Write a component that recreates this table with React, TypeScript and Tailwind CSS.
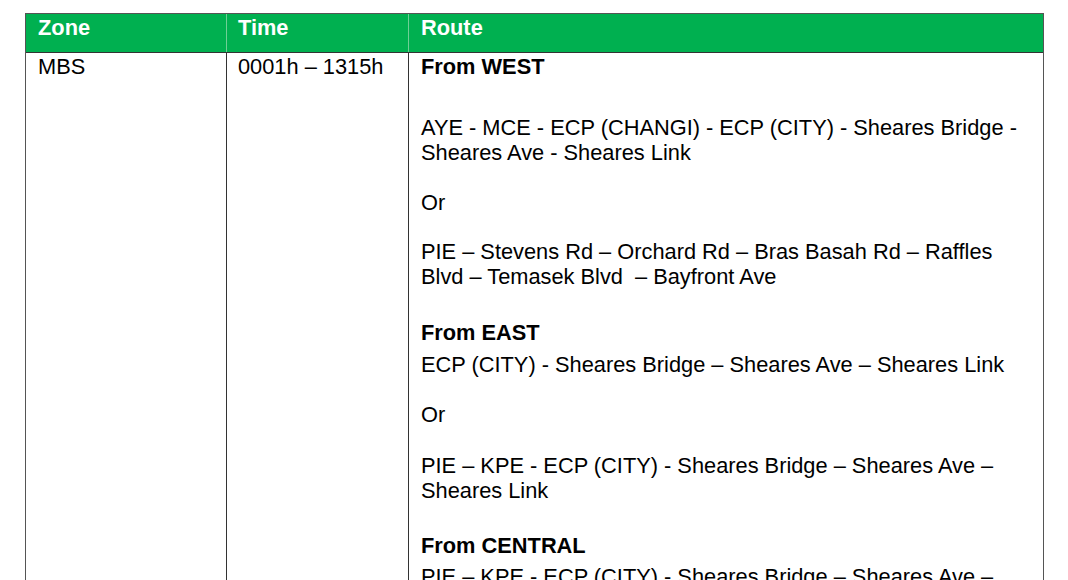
import React from "react";

export default function App() {
  const font = { fontFamily: '"Liberation Sans", Arial, sans-serif' };
  return (
    <div className="w-[1068px] h-[580px] overflow-hidden bg-white pt-[13px] pl-[25px]" style={font}>
      <div className="w-[1019px] border-x border-t border-[#555] text-[21.8px] leading-[24.5px] text-black">
        <div className="grid grid-cols-[201px_182px_1fr] h-[39px] bg-[#00b050] border-b border-[#333] text-white font-bold">
          <div className="pl-3 pt-[2px] border-r border-[#6fcf95]">Zone</div>
          <div className="pl-[11px] pt-[2px] border-r border-[#6fcf95]">Time</div>
          <div className="pl-3 pt-[2px]">Route</div>
        </div>
        <div className="grid grid-cols-[201px_182px_1fr] h-[560px]">
          <div className="pl-3 pt-[2px] border-r border-[#333]">MBS</div>
          <div className="pl-[11px] pt-[2px] border-r border-[#333]">0001h – 1315h</div>
          <div className="pl-3 pt-[2px] whitespace-pre">
            <div className="font-bold">From WEST</div>
            <div className="mt-[36.5px]">
              AYE - MCE - ECP (CHANGI) - ECP (CITY) - Sheares Bridge -<br />
              Sheares Ave - Sheares Link
            </div>
            <div className="mt-[26px]">Or</div>
            <div className="mt-[24.5px]">
              PIE – Stevens Rd – Orchard Rd – Bras Basah Rd – Raffles<br />
              Blvd – Temasek Blvd  – Bayfront Ave
            </div>
            <div className="mt-[32px] font-bold">From EAST</div>
            <div className="mt-[7.5px]">ECP (CITY) - Sheares Bridge – Sheares Ave – Sheares Link</div>
            <div className="mt-[25.5px]">Or</div>
            <div className="mt-[26.5px]">
              PIE – KPE - ECP (CITY) - Sheares Bridge – Sheares Ave –<br />
              Sheares Link
            </div>
            <div className="mt-[31px] font-bold">From CENTRAL</div>
            <div className="mt-[6.5px]">PIE – KPE - ECP (CITY) - Sheares Bridge – Sheares Ave –</div>
          </div>
        </div>
      </div>
    </div>
  );
}
